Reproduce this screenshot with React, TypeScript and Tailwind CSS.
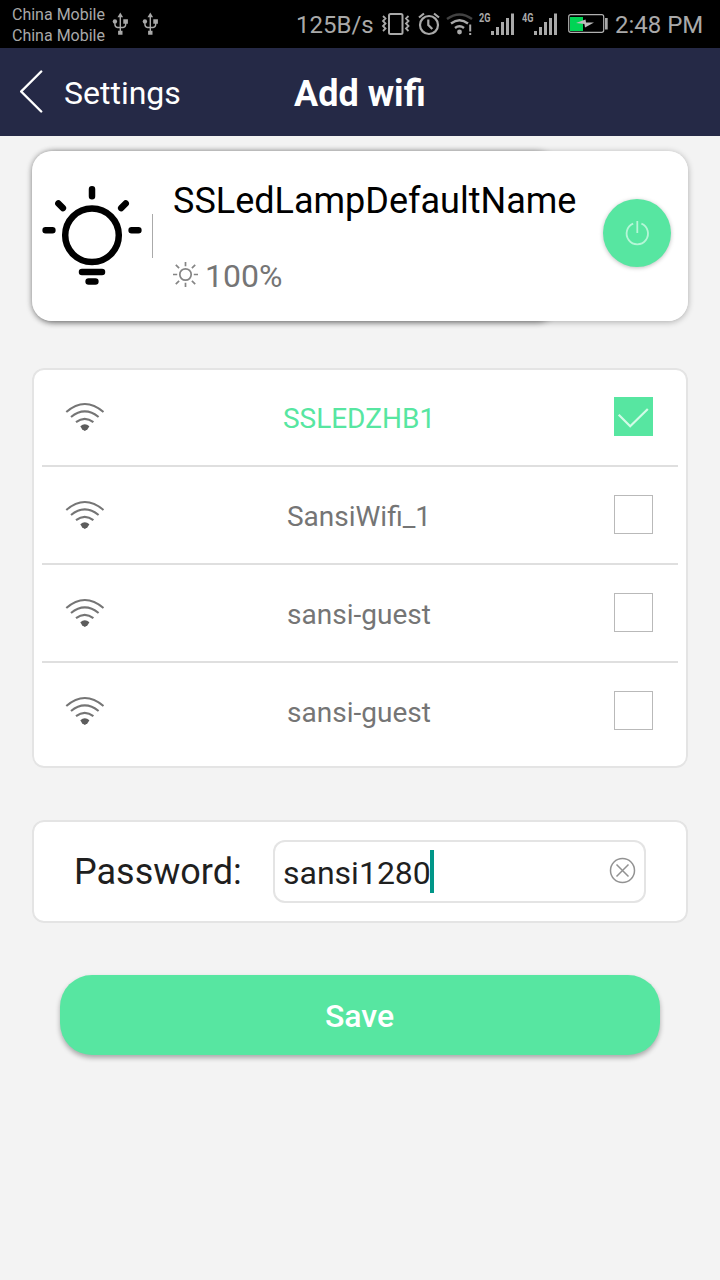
import React from "react";

const networks = [
  { name: "SSLEDZHB1", selected: true },
  { name: "SansiWifi_1", selected: false },
  { name: "sansi-guest", selected: false },
  { name: "sansi-guest", selected: false },
];

function UsbIcon({ className }: { className: string }) {
  return (
    <svg className={className} width="16" height="24" viewBox="-0.300 0 16 24" fill="none" stroke="#a9a9a9" strokeWidth="1.4">
      <path d="M8 3v18M2.600 9v3.200q0 3 2.600 3.300h5.600q2.600-.3 2.600-3.300V9" />
      <path d="M8 .500l2.800 4.700H5.200z" fill="#a9a9a9" stroke="none" />
      <circle cx="2.600" cy="9.400" r="2.200" fill="#a9a9a9" stroke="none" />
      <path d="M11 7.300h4.600v4.400H11zM5.800 18.800h4.400v4H5.800z" fill="#a9a9a9" stroke="none" />
    </svg>
  );
}

function Signal({ label }: { label: string }) {
  return (
    <div className="flex h-6 w-9 shrink-0 items-start">
      <span className="w-3 text-[13px] leading-[12px] font-bold">
        <span className="inline-block origin-left scale-x-70">{label}</span>
      </span>
      <svg width="24" height="24" viewBox="0 0 24 24" fill="#a9a9a9">
        <path d="M0 19h3v4H0zM5 15h3v8H5zM10 10h3v13h-3zM15 6h3v17h-3zM20 1.500h3V23h-3z" />
      </svg>
    </div>
  );
}

function StatusBar() {
  return (
    <div className="flex h-12 items-center bg-black pl-3 text-[#a9a9a9]">
      <div className="w-[100px] pt-px text-[16px] leading-[21px] whitespace-nowrap">
        <div>China Mobile</div>
        <div>China Mobile</div>
      </div>
      <UsbIcon className="" />
      <UsbIcon className="ml-[14px]" />
      <span className="ml-[138px] w-[85px] pt-0.5 text-[24px] leading-6 whitespace-nowrap">125B/s</span>
      <svg width="29" height="24" viewBox="381 12 29 24" fill="none" stroke="#a9a9a9" strokeWidth="2">
        <rect x="389" y="14" width="13.500" height="20" rx="1.500" />
        <path d="M383 16l2.500 2.500-2.500 2.500 2.500 2.500-2.500 2.500 2.500 2.500-2.500 2.500M408.500 16l-2.500 2.500 2.500 2.500-2.500 2.500 2.500 2.500-2.500 2.500 2.500 2.500" strokeWidth="1.800" />
      </svg>
      <svg className="ml-2" width="23" height="24" viewBox="418 12 23 24" fill="none" stroke="#a9a9a9" strokeWidth="2.200">
        <circle cx="429" cy="25" r="9" />
        <path d="M419 17.500l5-4M439 17.500l-5-4" />
        <path d="M428.300 19.500v5.500l4 4" />
      </svg>
      <svg className="ml-[5px]" width="27" height="24" viewBox="446 12 27 24" fill="none" stroke="#a9a9a9" strokeWidth="2.400">
        <path d="M447 19q12.500-9 25 0" stroke="#424242" />
        <path d="M451 23.500q8.500-6.500 17 0M455 28q4.500-3.500 9 0" />
        <circle cx="459.500" cy="32" r="2.400" fill="#a9a9a9" stroke="none" />
        <path d="M470.200 24.500v7M470.200 33v2" strokeWidth="2" />
      </svg>
      <div className="ml-1.5 flex">
        <Signal label="2G" />
        <div className="ml-[7px]">
          <Signal label="4G" />
        </div>
      </div>
      <svg className="ml-[10px]" width="40" height="20" viewBox="568 14 40 20">
        <rect x="568.700" y="14.700" width="35" height="17.600" rx="2" fill="none" stroke="#b0b0b0" strokeWidth="1.200" />
        <path d="M570 17h13v14h-13z" fill="#00d455" />
        <path d="M576 23l9.500-3.500.5 3h8l-9 5-.6-3.500z" fill="#bdbdbd" />
        <path d="M605 18h2.700v11.500H605z" fill="#a9a9a9" />
      </svg>
      <span className="ml-[7px] pt-0.5 text-[24px] leading-6 whitespace-nowrap">2:48 PM</span>
    </div>
  );
}

function Header() {
  return (
    <header className="flex h-[88px] items-center bg-[#252946] pt-0.5 pl-5 text-white">
      <svg className="-mt-0.5" width="24" height="44" viewBox="20 70 24 44" fill="none" stroke="white" strokeWidth="2.400" strokeLinecap="round">
        <path d="M41.200 71.500L21.200 91.500L41.200 111.500" />
      </svg>
      <span className="ml-5 w-[230px] text-[32px] leading-10">Settings</span>
      <h1 className="pt-0.5 text-[36px] leading-10 font-bold whitespace-nowrap">Add wifi</h1>
    </header>
  );
}

function BulbIcon() {
  return (
    <svg width="102" height="102" viewBox="41 185 102 102" fill="none" stroke="black" strokeWidth="6.500" strokeLinecap="round">
      <circle cx="92" cy="235.300" r="26.800" />
      <path d="M92 189.300v7M45.600 230.300h6.800M131.600 230.300h6.800M58.400 203.400l4.500 4.700M125.700 203.400l-4.500 4.700M82 272h20M88.600 281.600h6.800" />
    </svg>
  );
}

function LampCard() {
  return (
    <section className="relative mx-8 mt-[15px] h-[170px] rounded-[20px] shadow-[0_1px_6px_rgba(0,0,0,0.3)]">
      <div className="absolute inset-y-0 left-0.5 w-[522px] rounded-[20px] shadow-[0_1px_6px_rgba(0,0,0,0.45)]" />
      <div className="relative flex h-full rounded-[20px] bg-white pl-[9px]">
        <div className="pt-[34px]">
          <BulbIcon />
        </div>
        <div className="mt-[63px] ml-[9px] h-11 w-px bg-[#aaa]" />
        <div className="ml-5 w-[431px] pt-[29px]">
          <div className="text-[36px] leading-[42px] whitespace-nowrap text-black">SSLedLampDefaultName</div>
          <div className="mt-[33px] flex items-center text-[32px] leading-[42px] text-[#757575]">
            <svg className="-mt-1" width="26" height="26" viewBox="-12.500 -13.500 26 26" fill="none" stroke="#858585" strokeWidth="1.700">
              <circle r="5.700" />
              <path d="M0-12.500v4.200M0 12.500v-4.200M-12.500 0h4.200M12.500 0h-4.200M-9.700-9.700l3.300 3.300M9.700 9.700l-3.300-3.300M-9.700 9.700l3.300-3.300M9.700-9.700l-3.300 3.300" />
            </svg>
            <span className="ml-1.5">100%</span>
          </div>
        </div>
        <button className="mt-12 -ml-px flex size-[68px] items-center justify-center rounded-full bg-[#57e6a1] shadow-[0_1px_4px_rgba(0,0,0,0.25)]">
          <svg width="26" height="28" viewBox="624 219.500 26 28" fill="none" stroke="#b5f6d7" strokeWidth="1.800">
            <path d="M633.200 224.200a10.700 10.700 0 1 0 8.200 0M637.300 221.500v12" />
          </svg>
        </button>
      </div>
    </section>
  );
}

function WifiIcon() {
  return (
    <svg width="40" height="30" viewBox="65 402 40 30" fill="none" stroke="#757575" strokeWidth="2.100">
      <path d="M66.300 412Q84.800 396 103.500 412M71 417Q84.800 405.800 98.600 417M76 422.200Q84.800 415.500 93.400 422.200" />
      <path d="M80.300 426.300Q84.800 422.300 89.400 426.300L87.500 429.300L84.800 431L82.100 429.300z" fill="#5c5c5c" stroke="none" />
    </svg>
  );
}

function Checkbox({ checked }: { checked: boolean }) {
  return checked ? (
    <svg className="-mt-0.5" width="39" height="39" viewBox="0 0 39 39" fill="none">
      <path d="M0 0h39v39H0z" fill="#57e6a1" />
      <path d="M4.700 17.700L16.200 29.200L33.800 12" stroke="#d3fbe7" strokeWidth="2.200" />
    </svg>
  ) : (
    <div className="-mt-0.5 size-[39px] border border-[#b9b9b9] bg-white" />
  );
}

function NetworkList() {
  return (
    <section className="mx-8 mt-[47px] h-[400px] rounded-xl bg-white px-[10px] pt-px shadow-[inset_0_0_0_2px_#e4e4e4]">
      {networks.map((n, i) => (
        <div
          key={i}
          className="flex h-[98px] items-center border-b-2 border-[#dfdfdf] pr-[25px] pl-[23px] last:border-transparent"
        >
          <WifiIcon />
          <span
            className={
              n.selected
                ? "mr-[2px] flex-1 pt-1 pr-[9px] pl-[10px] text-center text-[28px] leading-8 text-[#57e6a1]"
                : "mr-[2px] flex-1 pt-1 pr-[9px] pl-[10px] text-center text-[28px] leading-8 text-[#757575]"
            }
          >
            {n.name}
          </span>
          <Checkbox checked={n.selected} />
        </div>
      ))}
    </section>
  );
}

function PasswordPanel() {
  return (
    <section className="mx-8 mt-[52px] flex h-[103px] items-center rounded-xl bg-white pl-[42px] shadow-[inset_0_0_0_2px_#e4e4e4]">
      <label className="w-[199px] text-[36px] leading-[42px] text-[#1f1f1f]">Password:</label>
      <div className="flex h-[63px] w-[373px] items-center rounded-xl pr-[10px] pl-[10px] shadow-[inset_0_0_0_2px_#e4e4e4]">
        <span className="w-[147px] pt-[3px] text-[32px] leading-[42px] whitespace-nowrap text-[#1f1f1f]">sansi1280</span>
        <span className="h-[43px] w-1 bg-[#009688]" />
        <svg className="-mt-0.5 ml-auto" width="27" height="27" viewBox="-13.500 -13.500 27 27" fill="none" stroke="#929292" strokeWidth="1.500">
          <circle r="12" />
          <path d="M-6-6L6 6M6-6L-6 6" />
        </svg>
      </div>
    </section>
  );
}

export default function App() {
  return (
    <main className="h-[1280px] w-[720px] overflow-hidden bg-[#f3f3f3] font-['Roboto',sans-serif]">
      <StatusBar />
      <Header />
      <LampCard />
      <NetworkList />
      <PasswordPanel />
      <button className="mx-[60px] mt-[52px] flex h-20 w-[600px] items-center justify-center rounded-[32px] bg-[#57e6a1] pt-0.5 pr-px text-[32px] font-medium text-white shadow-[0_3px_5px_rgba(0,0,0,0.3)]">
        Save
      </button>
    </main>
  );
}
